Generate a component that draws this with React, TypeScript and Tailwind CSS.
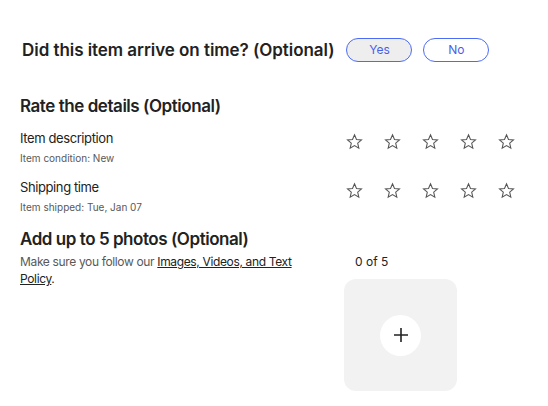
import React from 'react';

const Star = () => (
  <svg width="17" height="17" viewBox="0 0 24 24" fill="none" stroke="#555555" strokeWidth="1.5" strokeLinejoin="miter">
    <path d="M12 2.5l2.8 6.6 7.1.6-5.4 4.7 1.6 7-6.1-3.7-6.1 3.7 1.6-7-5.4-4.7 7.1-.6z" />
  </svg>
);

const RatingRow = ({ title, sub }: { title: string; sub: string }) => (
  <div className="flex items-start justify-between">
    <div>
      <p className="text-[13px] leading-[18px] tracking-[-0.4px] text-[#222222]">{title}</p>
      <p className="mt-[4px] text-[10px] leading-[14px] text-[#595959]">{sub}</p>
    </div>
    <div className="mt-[4px] mr-[13px] flex gap-[21px]">
      {[0, 1, 2, 3, 4].map((i) => (
        <Star key={i} />
      ))}
    </div>
  </div>
);

export default function App() {
  return (
    <div className="h-[406px] w-[548px] overflow-hidden bg-white font-['Inter',sans-serif] text-[#222222]">
      {/* Arrival question */}
      <div className="ml-[22px] mt-[38px] flex h-[24px] items-center">
        <h2 className="text-[17px] font-semibold leading-[24px] tracking-[-0.05px]">Did this item arrive on time? (Optional)</h2>
        <button className="ml-[12px] h-[24px] w-[66px] rounded-full border border-[#4d6cf5] bg-[#eeeeee] text-[12px] text-[#4a5fe8]">
          Yes
        </button>
        <button className="ml-[11px] h-[24px] w-[66px] rounded-full border border-[#4d6cf5] bg-white text-[12px] text-[#4a5fe8]">
          No
        </button>
      </div>

      <div className="px-[20px]">
        {/* Rate the details */}
        <h2 className="mt-[32px] text-[17px] font-semibold leading-[24px] tracking-[-0.45px]">Rate the details (Optional)</h2>
        <div className="mt-[11px] flex flex-col gap-[13px]">
          <RatingRow title="Item description" sub="Item condition: New" />
          <RatingRow title="Shipping time" sub="Item shipped: Tue, Jan 07" />
        </div>

        {/* Photos */}
        <h2 className="mt-[13px] text-[17px] font-semibold leading-[24px] tracking-[-0.45px]">Add up to 5 photos (Optional)</h2>
        <div className="mt-[2px] flex">
          <p className="w-[300px] text-[12px] leading-[17px] tracking-[-0.35px] text-[#595959]">
            Make sure you follow our{' '}
            <a href="#" className="text-[#222222] underline">Images, Videos, and Text Policy</a>
            <span className="text-[#222222]">.</span>
          </p>
          <div className="ml-[24px]">
            <p className="pl-[11px] text-[12px] leading-[17px] text-[#222222]">0 of 5</p>
            <button className="mt-[9px] flex h-[112px] w-[113px] items-center justify-center rounded-[12px] bg-[#f2f2f2]">
              <span className="flex h-[41px] w-[41px] items-center justify-center rounded-full bg-white">
                <svg width="16" height="16" viewBox="0 0 16 16" stroke="#222222" strokeWidth="1.6">
                  <path d="M8 1v14M1 8h14" />
                </svg>
              </span>
            </button>
          </div>
        </div>
      </div>
    </div>
  );
}
